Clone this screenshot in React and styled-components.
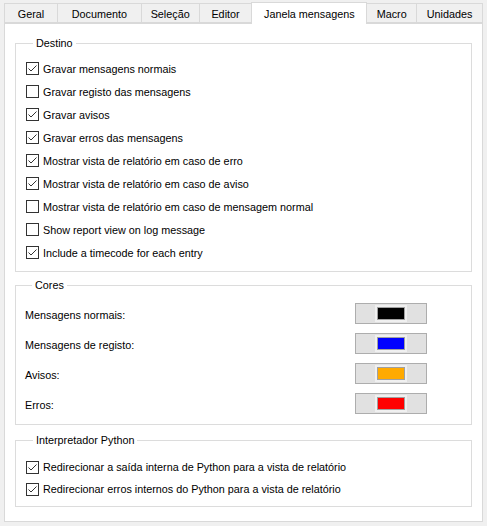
import React from 'react';
import styled, { createGlobalStyle } from 'styled-components';

const GlobalStyle = createGlobalStyle`
  html, body {
    margin: 0;
    padding: 0;
    background: #f0f0f0;
  }
  body {
    font-family: "Liberation Sans", Arial, sans-serif;
    font-size: 10.8px;
    color: #000;
  }
`

const Window = styled.div`
  width: 487px;
  height: 526px;
  background: #f0f0f0;
  box-sizing: border-box;
  padding: 2px 4px 0 4px;
  display: flex;
  flex-direction: column;
`

const TabBar = styled.div`
  display: flex;
  align-items: flex-end;
  height: 21px;
  position: relative;
  z-index: 1;
`

const Tab = styled.div`
  box-sizing: border-box;
  width: ${p => p.w}px;
  height: ${p => (p.active ? 22 : 20)}px;
  margin-bottom: ${p => (p.active ? -1 : 0)}px;
  border: 1px solid #d9d9d9;
  border-bottom: ${p => (p.active ? 'none' : '1px solid #d9d9d9')};
  margin-left: -1px;
  background: ${p => (p.active ? '#ffffff' : '#f0f0f0')};
  display: flex;
  align-items: center;
  justify-content: center;
  padding-top: ${p => (p.active ? 0 : 1)}px;
  &:first-child { margin-left: 0; }
`

const Panel = styled.div`
  box-sizing: border-box;
  height: 499px;
  background: #fff;
  border: 1px solid #d9d9d9;
  padding: 11px 10px 0 10px;
  display: flex;
  flex-direction: column;
`

const Group = styled.fieldset`
  margin: 0 0 ${p => p.gap || 0}px 0;
  padding: ${p => p.pad};
  border: 1px solid #dcdcdc;
  min-width: 0;
`

const Legend = styled.legend`
  padding: 0 3px;
  margin-left: 7px;
  line-height: 16px;
`

const CheckRow = styled.label`
  display: flex;
  align-items: center;
  height: ${p => p.h || 23}px;
  gap: 4px;
`

const Box = styled.span`
  box-sizing: border-box;
  width: 13px;
  height: 13px;
  border: 1px solid #333;
  background: #fff;
  display: flex;
  align-items: center;
  justify-content: center;
  flex-shrink: 0;
`

const ColorRow = styled.div`
  display: flex;
  align-items: center;
  justify-content: space-between;
  height: 30px;
`

const ColorLabel = styled.span`
  padding-top: 3px;
`

const ColorButton = styled.div`
  box-sizing: border-box;
  width: 72px;
  height: 21px;
  margin-right: 44px;
  background: #e1e1e1;
  border: 1px solid #adadad;
  display: flex;
  align-items: center;
  justify-content: center;
`

const Swatch = styled.span`
  box-sizing: border-box;
  width: 32px;
  height: 17px;
  border: 2px solid #f0f0f0;
  display: block;
  &::after {
    content: '';
    display: block;
    box-sizing: border-box;
    width: 28px;
    height: 13px;
    border: 1px solid #a0a0a0;
    background: ${p => p.color};
  }
`

function Check({ checked, h, children }) {
  return (
    <CheckRow h={h}>
      <Box>
        {checked && (
          <svg width="11" height="11" viewBox="0 0 11 11">
            <path d="M1.5 5.5 L4 8 L9.5 2.5" fill="none" stroke="#333" strokeWidth="1" />
          </svg>
        )}
      </Box>
      <span>{children}</span>
    </CheckRow>
  );
}

const tabs = [
  ['Geral', 54],
  ['Documento', 85],
  ['Seleção', 59],
  ['Editor', 54],
  ['Janela mensagens', 116],
  ['Macro', 51],
  ['Unidades', 67],
];

const destino = [
  ['Gravar mensagens normais', true],
  ['Gravar registo das mensagens', false],
  ['Gravar avisos', true],
  ['Gravar erros das mensagens', true],
  ['Mostrar vista de relatório em caso de erro', true],
  ['Mostrar vista de relatório em caso de aviso', true],
  ['Mostrar vista de relatório em caso de mensagem normal', false],
  ['Show report view on log message', false],
  ['Include a timecode for each entry', true],
];

const cores = [
  ['Mensagens normais:', '#000000'],
  ['Mensagens de registo:', '#0000ff'],
  ['Avisos:', '#ffaa00'],
  ['Erros:', '#ff0000'],
];

export default function App() {
  return (
    <>
      <GlobalStyle />
      <Window>
        <TabBar>
          {tabs.map(([t, w]) => (
            <Tab key={t} w={w} active={t === 'Janela mensagens'}>{t}</Tab>
          ))}
        </TabBar>
        <Panel>
          <Group gap={5} pad="6px 10px 7px 10px">
            <Legend>Destino</Legend>
            {destino.map(([t, c]) => (
              <Check key={t} checked={c}>{t}</Check>
            ))}
          </Group>
          <Group gap={7} pad="5px 0 6px 9px">
            <Legend>Cores</Legend>
            {cores.map(([t, c]) => (
              <ColorRow key={t}>
                <ColorLabel>{t}</ColorLabel>
                <ColorButton><Swatch color={c} /></ColorButton>
              </ColorRow>
            ))}
          </Group>
          <Group pad="8px 10px 6px 10px">
            <Legend>Interpretador Python</Legend>
            <Check checked h={22}>Redirecionar a saída interna de Python para a vista de relatório</Check>
            <Check checked h={22}>Redirecionar erros internos do Python para a vista de relatório</Check>
          </Group>
        </Panel>
      </Window>
    </>
  );
}
